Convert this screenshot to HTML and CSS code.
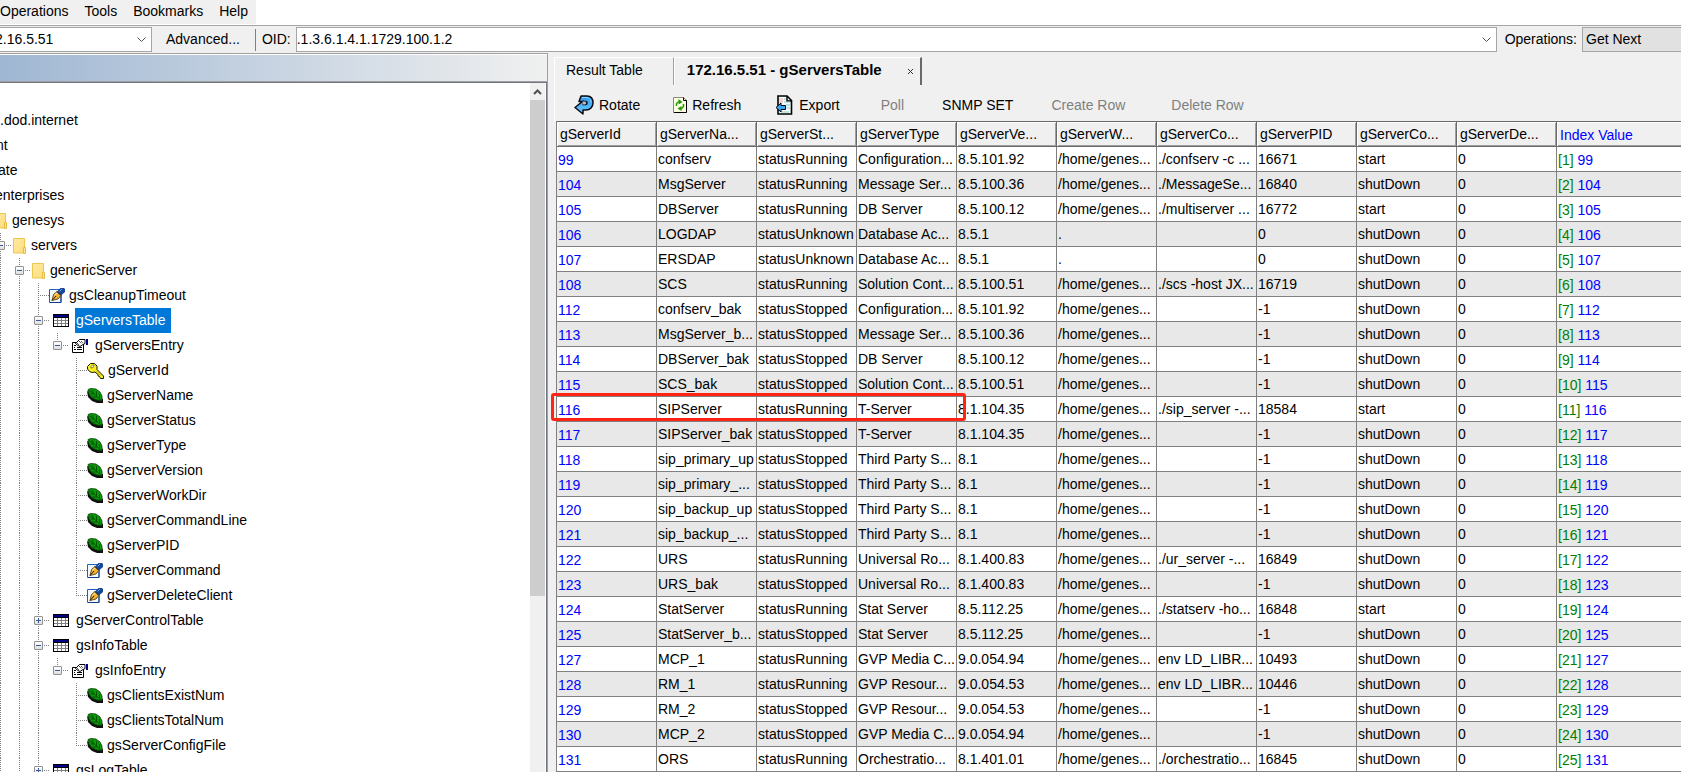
FILE: index.html
```html
<!DOCTYPE html>
<html lang="en">
<head>
<meta charset="utf-8">
<title>MIB Browser</title>
<link rel="stylesheet" href="styles.css">
</head>
<body>
<svg class="sprite" aria-hidden="true">
  <linearGradient id="fold" x1="0" y1="0" x2="1" y2="1"><stop offset="0" stop-color="#ffeaa4"/><stop offset="1" stop-color="#ffdc7c"/></linearGradient>
  <linearGradient id="aqua" x1="0" y1="0" x2="0" y2="1"><stop offset="0" stop-color="#2c94ee"/><stop offset="1" stop-color="#6cccff"/></linearGradient>
  <symbol id="folder" viewBox="0 0 14 16"><path d="M.5.5h11v14.500h-11z" fill="url(#fold)" stroke="#ecc74e"/><path d="M10.500 9.500h2v6h-2z" fill="#ffe69a" stroke="#e6bd45"/></symbol>
  <symbol id="grid" viewBox="0 0 16 13"><path d="M0 0h16v13H0z" fill="#000"/><path d="M1 1h14v2H1z" fill="#00008b"/><path d="M1 4h14v8H1z" fill="#fff"/><path d="M4.500 4v8M8.500 4v8M12.500 4v8M1 6.500h14M1 9.500h14" stroke="#808080"/></symbol>
  <symbol id="leaf" viewBox="0 0 16 15"><path d="M0 3l1 6 4 4 5 2h6v-4z" fill="#111"/><path d="M1 1.500L4 .5l5 .5 4 3 2 4v4.500l-5-.5-5-2-3-4z" fill="#0a9a0a" stroke="#064006" stroke-width=".8"/><path d="M2 2.500l5 3.500 8 7M5 2l2 4M9.500 3v5M12.500 6v4.500M3.500 6h3.500M5 9h5" fill="none" stroke="#034803" stroke-width=".8"/></symbol>
  <symbol id="pen" viewBox="0 0 16 15"><path d="M.5 1.500h11.500v13H.5z" fill="#f2f8ff" stroke="#1b64b8"/><path d="M12 8v6.500H1" fill="none" stroke="#123a86"/><path d="M3 12.500l1.500-6L8 3.500l4 4-3 3.500z" fill="#eeb233" stroke="#4a3203" stroke-width=".8"/><path d="M3 12.500l4-4.500" stroke="#2b1c00"/><path d="M5.500 7l2.500-2" fill="none" stroke="#ffedb5"/><path d="M8 3.500L11.500 0H15l1 1v3l-4 3.500z" fill="#1a4796"/><path d="M8 3.500l4 4" stroke="#101a3a"/><path d="M10.500 3.500L13 1" stroke="#6aa8ee"/></symbol>
  <symbol id="key" viewBox="0 0 18 16"><path d="M3.500.5h4L10 3v3.500l6.500 6.500v2.500h-3l-1-2-1.500-.5v-1.500L8 9 5 9.500 2.500 8.500.5 6V3.500z" fill="#fbee20" stroke="#1c1a00"/><path d="M4 3.500L5.500 2H7v1.500L5 5H4z" fill="#fff" stroke="#4b4600" stroke-width=".7"/><path d="M9 7.500l5.500 5.500" stroke="#b3a000" stroke-width=".8"/></symbol>
  <symbol id="props" viewBox="0 0 16 14"><path d="M.5 3.500h11v10H.5z" fill="#fff" stroke="#000"/><path d="M2 6.500h2M2 8.500h1M2 10.500h2M5 8.500h5M5 10.500h5" stroke="#000"/><path d="M3.500 4.500l4-4H13v4l-2 1-3 2-2-1z" fill="#fff" stroke="#000"/><path d="M5 4l2 2M7 2l3 3M9 2l2 2" stroke="#000" stroke-dasharray="1 1"/><path d="M14 0h2v6h-2z" fill="#00008b"/></symbol>
  <symbol id="rotate" viewBox="0 0 20 20"><path d="M7 1h6c4 0 6 3 6 7s-3 7-7 7H9v4l-8-6.500L9 6v3.500h2.500c2 0 2-3 0-3H5z" fill="url(#aqua)" stroke="#0a0a14" stroke-width="1.500" stroke-linejoin="round"/><path d="M8.500 6.500h3v3h-3z" fill="#b8bcc4"/><path d="M8 2.500h5c3 .5 4 3 4 5" fill="none" stroke="#8cd8ff"/></symbol>
  <symbol id="refresh" viewBox="0 0 14 16"><path d="M.5.5h10l3 3v12H.5z" fill="#ffffe6" stroke="#8a8a74"/><path d="M10.500.5v3h3v12H1" fill="none" stroke="#000"/><path d="M3.500 9V6.500l2.500-2M10.500 7v2.500L8 12" fill="none" stroke="#1f9a00" stroke-width="1.500"/><path d="M5.500 2l4 3-4 2.500zM8.500 9v5l-4-2.500z" fill="#1f9a00"/></symbol>
  <symbol id="export" viewBox="0 0 18 20"><path d="M3 1h9l4.500 4.500V19H3z" fill="#f2ffff" stroke="#000" stroke-width="1.600"/><path d="M12 1v5h5" fill="none" stroke="#000" stroke-width="1.400"/><path d="M5 3v5M7 3v5" stroke="#f4aaaa"/><path d="M9 4h2M9 7h6M11 10h4M12 13h3M6 17h8" stroke="#8ac9cc"/><path d="M1 12.500L6 8v2.500h4.500v4H6V17z" fill="#38a8f5" stroke="#000"/></symbol>
</svg>
<div class="app">
  <nav class="menubar">
    <button type="button">Operations</button><button type="button">Tools</button><button type="button">Bookmarks</button><button type="button">Help</button>
  </nav>
  <div class="addressbar">
    <div class="combo host"><input type="text" aria-label="Address" value="2.16.5.51"><svg viewBox="0 0 9 6"><path d="M.5.5l4 4 4-4"/></svg></div>
    <button type="button" class="advanced">Advanced...</button>
    <label for="oid">OID:</label>
    <div class="combo oid"><input type="text" id="oid" value=".1.3.6.1.4.1.1729.100.1.2"><svg viewBox="0 0 9 6"><path d="M.5.5l4 4 4-4"/></svg></div>
    <label for="op" class="oplabel">Operations:</label>
    <select id="op"><option>Get Next</option></select>
  </div>
  <div class="panes">
    <aside class="sidebar">
      <div class="titlestrip"></div>
      <div class="treebox">
        <ul class="tree">
          <li class="root"><span>.dod.internet</span></li>
          <li class="cut1"><span>nt</span></li>
          <li class="cut2"><span>ate</span></li>
          <li class="cut3"><span>enterprises</span></li>
          <li class="edge"><svg class="folder"><use href="#folder"/></svg><span>genesys</span></li>
          <li><i class="tee"><button type="button" class="tg" aria-label="Collapse"></button></i><svg class="folder"><use href="#folder"/></svg><span>servers</span></li>
          <li><i></i><i class="tee"><button type="button" class="tg" aria-label="Collapse"></button></i><svg class="folder"><use href="#folder"/></svg><span>genericServer</span></li>
          <li><i></i><i></i><i class="tee leafend"></i><svg class="item"><use href="#pen"/></svg><span>gsCleanupTimeout</span></li>
          <li><i></i><i></i><i class="tee"><button type="button" class="tg" aria-label="Collapse"></button></i><svg class="grid"><use href="#grid"/></svg><span class="selected">gServersTable</span></li>
          <li><i></i><i></i><i></i><i class="end"><button type="button" class="tg" aria-label="Collapse"></button></i><svg class="props"><use href="#props"/></svg><span>gServersEntry</span></li>
          <li><i></i><i></i><i></i><i class="none"></i><i class="tee leafend"></i><svg class="key"><use href="#key"/></svg><span>gServerId</span></li>
          <li><i></i><i></i><i></i><i class="none"></i><i class="tee leafend"></i><svg class="item"><use href="#leaf"/></svg><span>gServerName</span></li>
          <li><i></i><i></i><i></i><i class="none"></i><i class="tee leafend"></i><svg class="item"><use href="#leaf"/></svg><span>gServerStatus</span></li>
          <li><i></i><i></i><i></i><i class="none"></i><i class="tee leafend"></i><svg class="item"><use href="#leaf"/></svg><span>gServerType</span></li>
          <li><i></i><i></i><i></i><i class="none"></i><i class="tee leafend"></i><svg class="item"><use href="#leaf"/></svg><span>gServerVersion</span></li>
          <li><i></i><i></i><i></i><i class="none"></i><i class="tee leafend"></i><svg class="item"><use href="#leaf"/></svg><span>gServerWorkDir</span></li>
          <li><i></i><i></i><i></i><i class="none"></i><i class="tee leafend"></i><svg class="item"><use href="#leaf"/></svg><span>gServerCommandLine</span></li>
          <li><i></i><i></i><i></i><i class="none"></i><i class="tee leafend"></i><svg class="item"><use href="#leaf"/></svg><span>gServerPID</span></li>
          <li><i></i><i></i><i></i><i class="none"></i><i class="tee leafend"></i><svg class="item"><use href="#pen"/></svg><span>gServerCommand</span></li>
          <li><i></i><i></i><i></i><i class="none"></i><i class="end leafend"></i><svg class="item"><use href="#pen"/></svg><span>gServerDeleteClient</span></li>
          <li><i></i><i></i><i class="tee"><button type="button" class="tg plus" aria-label="Expand"></button></i><svg class="grid"><use href="#grid"/></svg><span>gServerControlTable</span></li>
          <li><i></i><i></i><i class="tee"><button type="button" class="tg" aria-label="Collapse"></button></i><svg class="grid"><use href="#grid"/></svg><span>gsInfoTable</span></li>
          <li><i></i><i></i><i></i><i class="end"><button type="button" class="tg" aria-label="Collapse"></button></i><svg class="props"><use href="#props"/></svg><span>gsInfoEntry</span></li>
          <li><i></i><i></i><i></i><i class="none"></i><i class="tee leafend"></i><svg class="item"><use href="#leaf"/></svg><span>gsClientsExistNum</span></li>
          <li><i></i><i></i><i></i><i class="none"></i><i class="tee leafend"></i><svg class="item"><use href="#leaf"/></svg><span>gsClientsTotalNum</span></li>
          <li><i></i><i></i><i></i><i class="none"></i><i class="end leafend"></i><svg class="item"><use href="#leaf"/></svg><span>gsServerConfigFile</span></li>
          <li><i></i><i></i><i class="tee"><button type="button" class="tg plus" aria-label="Expand"></button></i><svg class="grid"><use href="#grid"/></svg><span>gsLogTable</span></li>
        </ul>
        <div class="scrollbar"><button type="button" aria-label="Scroll up"><svg viewBox="0 0 9 6"><path d="M1 5l3.500-3.500L8 5"/></svg></button><div class="thumb"></div></div>
      </div>
    </aside>
    <main class="main">
      <div class="tabs">
        <button type="button" class="tab">Result Table</button>
        <div class="tab active"><button type="button">172.16.5.51 - gServersTable</button><button type="button" class="close" aria-label="Close tab"><svg viewBox="0 0 7 7"><path d="M1 1l5 5M6 1L1 6"/></svg></button></div>
      </div>
      <div class="toolbar">
        <button type="button" class="rotate"><svg class="i20"><use href="#rotate"/></svg>Rotate</button>
        <button type="button" class="refresh"><svg class="i14"><use href="#refresh"/></svg>Refresh</button>
        <button type="button" class="export"><svg class="i18"><use href="#export"/></svg>Export</button>
        <button type="button" disabled>Poll</button>
        <button type="button">SNMP SET</button>
        <button type="button" disabled>Create Row</button>
        <button type="button" class="delete" disabled>Delete Row</button>
      </div>
      <table>
        <thead><tr><th>gServerId</th><th>gServerNa...</th><th>gServerSt...</th><th>gServerType</th><th>gServerVe...</th><th>gServerW...</th><th>gServerCo...</th><th>gServerPID</th><th>gServerCo...</th><th>gServerDe...</th><th class="index">Index Value</th></tr></thead>
        <tbody>
          <tr><td>99</td><td>confserv</td><td>statusRunning</td><td>Configuration...</td><td>8.5.101.92</td><td>/home/genes...</td><td>./confserv -c ...</td><td>16671</td><td>start</td><td>0</td><td><b>[1]</b> 99</td></tr>
          <tr><td>104</td><td>MsgServer</td><td>statusRunning</td><td>Message Ser...</td><td>8.5.100.36</td><td>/home/genes...</td><td>./MessageSe...</td><td>16840</td><td>shutDown</td><td>0</td><td><b>[2]</b> 104</td></tr>
          <tr><td>105</td><td>DBServer</td><td>statusRunning</td><td>DB Server</td><td>8.5.100.12</td><td>/home/genes...</td><td>./multiserver ...</td><td>16772</td><td>start</td><td>0</td><td><b>[3]</b> 105</td></tr>
          <tr><td>106</td><td>LOGDAP</td><td>statusUnknown</td><td>Database Ac...</td><td>8.5.1</td><td>.</td><td></td><td>0</td><td>shutDown</td><td>0</td><td><b>[4]</b> 106</td></tr>
          <tr><td>107</td><td>ERSDAP</td><td>statusUnknown</td><td>Database Ac...</td><td>8.5.1</td><td>.</td><td></td><td>0</td><td>shutDown</td><td>0</td><td><b>[5]</b> 107</td></tr>
          <tr><td>108</td><td>SCS</td><td>statusRunning</td><td>Solution Cont...</td><td>8.5.100.51</td><td>/home/genes...</td><td>./scs -host JX...</td><td>16719</td><td>shutDown</td><td>0</td><td><b>[6]</b> 108</td></tr>
          <tr><td>112</td><td>confserv_bak</td><td>statusStopped</td><td>Configuration...</td><td>8.5.101.92</td><td>/home/genes...</td><td></td><td>-1</td><td>shutDown</td><td>0</td><td><b>[7]</b> 112</td></tr>
          <tr><td>113</td><td>MsgServer_b...</td><td>statusStopped</td><td>Message Ser...</td><td>8.5.100.36</td><td>/home/genes...</td><td></td><td>-1</td><td>shutDown</td><td>0</td><td><b>[8]</b> 113</td></tr>
          <tr><td>114</td><td>DBServer_bak</td><td>statusStopped</td><td>DB Server</td><td>8.5.100.12</td><td>/home/genes...</td><td></td><td>-1</td><td>shutDown</td><td>0</td><td><b>[9]</b> 114</td></tr>
          <tr><td>115</td><td>SCS_bak</td><td>statusStopped</td><td>Solution Cont...</td><td>8.5.100.51</td><td>/home/genes...</td><td></td><td>-1</td><td>shutDown</td><td>0</td><td><b>[10]</b> 115</td></tr>
          <tr><td class="marked">116<span class="marker"></span></td><td>SIPServer</td><td>statusRunning</td><td>T-Server</td><td>8.1.104.35</td><td>/home/genes...</td><td>./sip_server -...</td><td>18584</td><td>start</td><td>0</td><td><b>[11]</b> 116</td></tr>
          <tr><td>117</td><td>SIPServer_bak</td><td>statusStopped</td><td>T-Server</td><td>8.1.104.35</td><td>/home/genes...</td><td></td><td>-1</td><td>shutDown</td><td>0</td><td><b>[12]</b> 117</td></tr>
          <tr><td>118</td><td>sip_primary_up</td><td>statusStopped</td><td>Third Party S...</td><td>8.1</td><td>/home/genes...</td><td></td><td>-1</td><td>shutDown</td><td>0</td><td><b>[13]</b> 118</td></tr>
          <tr><td>119</td><td>sip_primary_...</td><td>statusStopped</td><td>Third Party S...</td><td>8.1</td><td>/home/genes...</td><td></td><td>-1</td><td>shutDown</td><td>0</td><td><b>[14]</b> 119</td></tr>
          <tr><td>120</td><td>sip_backup_up</td><td>statusStopped</td><td>Third Party S...</td><td>8.1</td><td>/home/genes...</td><td></td><td>-1</td><td>shutDown</td><td>0</td><td><b>[15]</b> 120</td></tr>
          <tr><td>121</td><td>sip_backup_...</td><td>statusStopped</td><td>Third Party S...</td><td>8.1</td><td>/home/genes...</td><td></td><td>-1</td><td>shutDown</td><td>0</td><td><b>[16]</b> 121</td></tr>
          <tr><td>122</td><td>URS</td><td>statusRunning</td><td>Universal Ro...</td><td>8.1.400.83</td><td>/home/genes...</td><td>./ur_server -...</td><td>16849</td><td>shutDown</td><td>0</td><td><b>[17]</b> 122</td></tr>
          <tr><td>123</td><td>URS_bak</td><td>statusStopped</td><td>Universal Ro...</td><td>8.1.400.83</td><td>/home/genes...</td><td></td><td>-1</td><td>shutDown</td><td>0</td><td><b>[18]</b> 123</td></tr>
          <tr><td>124</td><td>StatServer</td><td>statusRunning</td><td>Stat Server</td><td>8.5.112.25</td><td>/home/genes...</td><td>./statserv -ho...</td><td>16848</td><td>start</td><td>0</td><td><b>[19]</b> 124</td></tr>
          <tr><td>125</td><td>StatServer_b...</td><td>statusStopped</td><td>Stat Server</td><td>8.5.112.25</td><td>/home/genes...</td><td></td><td>-1</td><td>shutDown</td><td>0</td><td><b>[20]</b> 125</td></tr>
          <tr><td>127</td><td>MCP_1</td><td>statusRunning</td><td>GVP Media C...</td><td>9.0.054.94</td><td>/home/genes...</td><td>env LD_LIBR...</td><td>10493</td><td>shutDown</td><td>0</td><td><b>[21]</b> 127</td></tr>
          <tr><td>128</td><td>RM_1</td><td>statusRunning</td><td>GVP Resour...</td><td>9.0.054.53</td><td>/home/genes...</td><td>env LD_LIBR...</td><td>10446</td><td>shutDown</td><td>0</td><td><b>[22]</b> 128</td></tr>
          <tr><td>129</td><td>RM_2</td><td>statusStopped</td><td>GVP Resour...</td><td>9.0.054.53</td><td>/home/genes...</td><td></td><td>-1</td><td>shutDown</td><td>0</td><td><b>[23]</b> 129</td></tr>
          <tr><td>130</td><td>MCP_2</td><td>statusStopped</td><td>GVP Media C...</td><td>9.0.054.94</td><td>/home/genes...</td><td></td><td>-1</td><td>shutDown</td><td>0</td><td><b>[24]</b> 130</td></tr>
          <tr><td>131</td><td>ORS</td><td>statusRunning</td><td>Orchestratio...</td><td>8.1.401.01</td><td>/home/genes...</td><td>./orchestratio...</td><td>16845</td><td>shutDown</td><td>0</td><td><b>[25]</b> 131</td></tr>
        </tbody>
      </table>
    </main>
  </div>
</div>
</body>
</html>
```
FILE: styles.css
```css
* { box-sizing: border-box; }

body {
  margin: 0;
  background: #fff;
  color: #000;
  font: 14px/16px "Liberation Sans", Arial, sans-serif;
}

button, input, select {
  font: inherit;
  color: inherit;
  margin: 0;
  padding: 0;
  border: 0;
  border-radius: 0;
  background: none;
}

.sprite { position: absolute; width: 0; height: 0; }

.app {
  display: flex;
  flex-direction: column;
  height: 100vh;
  overflow: hidden;
}

/* Menu bar */
.menubar {
  display: flex;
  align-self: flex-start;
  gap: 16px;
  height: 24px;
  padding: 0 8px 2px 0;
  background: #f0f0f0;
}

/* Address bar */
.addressbar {
  display: flex;
  align-items: center;
  flex: none;
  height: 28px;
  margin-top: 1px;
  background: #f0f0f0;
  border-top: 1px solid #a5a5a5;
}

.combo {
  display: flex;
  align-items: center;
  height: 25px;
  padding-right: 5px;
  background: #fff;
  border: 1px solid #a5a5a5;
}

.combo input { flex: 1; min-width: 0; padding: 0 0 2px; outline: 0; }
.combo svg { width: 9px; height: 6px; fill: none; stroke: #505050; }
.host { width: 152px; border-left: 0; }
.host input { text-indent: -5px; }
.oid { flex: 1; }

.advanced {
  height: 22px;
  margin-right: 6px;
  padding: 0 15px 2px 14px;
  border-right: 1px solid #808080;
}

.addressbar label { margin-right: 5px; padding-bottom: 2px; }
.addressbar .oplabel { margin: 0 5px 0 8px; }

#op {
  width: 99px;
  height: 25px;
  padding: 0 0 2px 3px;
  appearance: none;
  background: #e1e1e1;
  border: 1px solid #a5a5a5;
  border-right: 0;
}

.panes {
  display: grid;
  grid-template-columns: 548px minmax(0, 1fr);
  flex: 1;
  min-height: 0;
  background: #f0f0f0;
}

/* Tree side */
.sidebar {
  display: flex;
  flex-direction: column;
  min-height: 0;
  border-top: 1px solid #a0a0a0;
  border-right: 1px solid #a0a0a0;
}

.titlestrip {
  flex: none;
  height: 28px;
  border-top: 1px solid #fff;
  border-bottom: 1px solid #a0a0a0;
  background: linear-gradient(90deg, #9fb7d3, #f0f0f0);
}

.treebox {
  display: flex;
  flex: 1;
  min-height: 0;
  background: #fff;
  border-top: 1px solid #70757f;
  border-right: 1px solid #70757f;
}

.tree {
  flex: 1;
  margin: 0;
  padding: 25px 0 0;
  list-style: none;
  overflow: hidden;
}

.tree li { display: flex; align-items: center; height: 25px; white-space: nowrap; }
.tree span { line-height: 25px; padding: 0 5px 0 1px; }
.tree .selected { background: #0078d7; color: #fff; }
.tree .root { margin-left: -1px; }
.tree .cut1 { margin-left: -5px; }
.tree .cut2 { margin-left: -3px; }
.tree .cut3 { margin-left: -6px; }
.tree .edge { margin-left: -6px; }
.tree svg { flex: none; }

.folder { width: 14px; height: 16px; margin: 0 3px 0 -6px; }
.edge .folder { margin-left: 0; }
.grid { width: 16px; height: 13px; margin: 0 6px 0 -4px; }
.props { width: 16px; height: 14px; margin: 0 6px 0 -4px; }
.item { width: 16px; height: 15px; margin-right: 3px; }
.key { width: 18px; height: 16px; margin-right: 2px; }

/* Guide lines: one cell per level, the line on its left edge */
.tree i {
  flex: none;
  display: flex;
  align-items: center;
  width: 19px;
  height: 25px;
  background: repeating-linear-gradient(#808080 0 1px, transparent 1px 2px) 0 0 / 1px 100% no-repeat;
}

.tree .none { background: none; }

.tree .tee, .tree .end {
  background:
    repeating-linear-gradient(#808080 0 1px, transparent 1px 2px) 0 0 / 1px 100% no-repeat,
    repeating-linear-gradient(90deg, #808080 0 1px, transparent 1px 2px) 0 12px / 12px 1px no-repeat;
}

.tree .end { background-size: 1px 13px, 12px 1px; }
.tree .leafend { width: 11px; }

.tg {
  flex: none;
  width: 9px;
  height: 9px;
  margin-left: -4px;
  border: 1px solid #919191;
  border-radius: 1px;
  background:
    linear-gradient(#3b5a9d, #3b5a9d) 1px 3px / 5px 1px no-repeat,
    linear-gradient(#fff, #dedede);
}

.tg.plus {
  background:
    linear-gradient(#3b5a9d, #3b5a9d) 1px 3px / 5px 1px no-repeat,
    linear-gradient(#3b5a9d, #3b5a9d) 3px 1px / 1px 5px no-repeat,
    linear-gradient(#fff, #dedede);
}

.scrollbar {
  display: flex;
  flex-direction: column;
  width: 16px;
  border-right: 1px solid #fff;
  background: #f0f0f0;
}

.scrollbar button { display: flex; justify-content: center; align-items: center; height: 17px; }
.scrollbar svg { width: 9px; height: 6px; fill: none; stroke: #505050; stroke-width: 2; }
.thumb { height: 72%; background: #cdcdcd; }

/* Result side */
.main { padding: 4px 0 0 6px; min-width: 0; }

.tabs { display: flex; height: 28px; }

.tab {
  padding: 0 30px 3px 11px;
  border: 0 solid #fff;
  border-width: 1px 0 0 1px;
  border-right: 1px solid #a0a0a0;
}

.tab.active {
  display: flex;
  align-items: center;
  gap: 25px;
  padding: 0 6px 3px 12px;
  border-right: 2px solid #696969;
  font-size: 15px;
  font-weight: bold;
}

.close { display: flex; padding-top: 3px; }
.close svg { width: 7px; height: 7px; fill: none; stroke: #333; }

.toolbar {
  display: flex;
  align-items: center;
  gap: 38px;
  height: 36px;
  padding: 4px 0 0 19px;
  border-left: 1px solid #fff;
}

.toolbar button { display: flex; align-items: center; gap: 5px; }
.toolbar button:disabled { color: #808080; }
.toolbar .rotate { margin-right: -5px; }
.toolbar .refresh { margin-right: -4px; }
.toolbar .export { gap: 6px; margin-right: 3px; }
.toolbar .delete { margin-left: 8px; }
.i20 { width: 20px; height: 20px; }
.i14 { width: 14px; height: 16px; }
.i18 { width: 18px; height: 20px; }

table {
  width: calc(100% - 2px);
  margin-left: 2px;
  table-layout: fixed;
  border-collapse: separate;
  border-spacing: 0;
  border-left: 1px solid #808080;
}

th, td { overflow: hidden; white-space: nowrap; text-align: left; font-weight: normal; }

th {
  width: 100px;
  height: 26px;
  padding: 0 0 0 3px;
  background: #f0f0f0;
  border-top: 1px solid #696969;
  border-right: 1px solid #696969;
  border-bottom: 1px solid #696969;
  box-shadow: inset 1px 1px #fff, inset -1px -1px #a0a0a0;
}

th.index {
  width: auto;
  padding-top: 2px;
  color: #00f;
  border-right: 0;
  box-shadow: inset 1px 1px #fff, inset 0 -1px #a0a0a0;
}

td {
  height: 25px;
  padding: 0 0 1px 1px;
  border-right: 1px solid #808080;
  border-bottom: 1px solid #808080;
}

tbody tr { background: #fff; }
tbody tr:nth-child(even) { background: #e8e8e8; }
td:first-child, td:last-child { padding-top: 2px; padding-bottom: 0; color: #00f; }
td:last-child { border-right: 0; }
td b { font-weight: normal; color: #008000; }

/* Red frame drawn over the highlighted row */
.marked { position: relative; overflow: visible; }

.marker {
  position: absolute;
  left: -6px;
  top: -4px;
  width: 415px;
  height: 28px;
  border: 3px solid #ff2414;
  border-radius: 3px;
  pointer-events: none;
}
```
